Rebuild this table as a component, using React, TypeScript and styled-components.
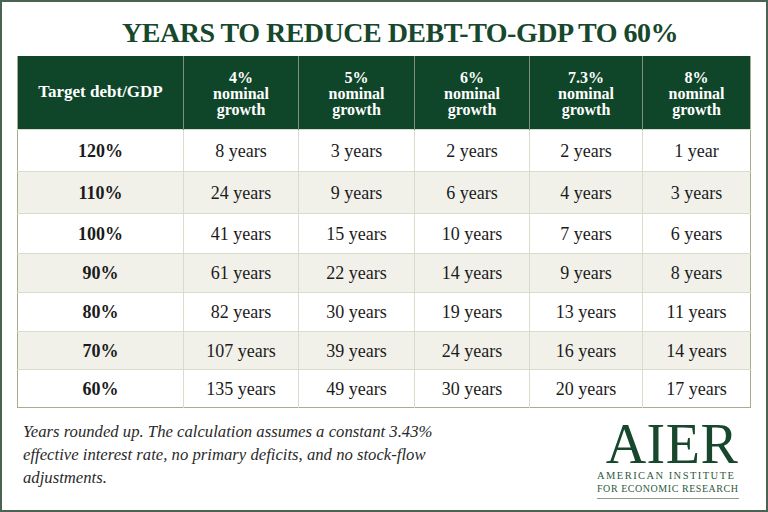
import styled, { createGlobalStyle } from "styled-components";

const GlobalStyle = createGlobalStyle`
  html, body {
    margin: 0;
    padding: 0;
    background: #ffffff;
  }
  * {
    box-sizing: border-box;
  }
`;

const GREEN = "#0f4529";

const Frame = styled.div`
  width: 768px;
  height: 512px;
  border: 2px solid #4b6352;
  background: #ffffff;
  display: flex;
  flex-direction: column;
  padding: 0 16px 0 15px;
  font-family: "Liberation Serif", "Times New Roman", serif;
  overflow: hidden;
`;

const Title = styled.h1`
  margin: 0;
  height: 54px;
  display: flex;
  align-items: center;
  justify-content: center;
  padding-top: 8px;
  padding-left: 33px;
  font-size: 28px;
  font-weight: 700;
  letter-spacing: -0.5px;
  color: #17472c;
`;

const Table = styled.table`
  width: 733px;
  border-collapse: collapse;
  table-layout: fixed;
  border: 1.5px solid #a3b08f;
  border-top: none;
`;

const HeadCell = styled.th<{ $first?: boolean }>`
  height: 73px;
  background: ${GREEN};
  color: #ffffff;
  font-weight: 700;
  font-size: ${({ $first }) => ($first ? "17px" : "16px")};
  line-height: 16px;
  text-align: center;
  vertical-align: middle;
  padding: 0;
  padding-top: ${({ $first }) => ($first ? "0" : "4px")};
  border-left: 1px solid #7d8f80;
  &:first-child {
    border-left: none;
  }
`;

const Row = styled.tr<{ $shade: boolean }>`
  background: ${({ $shade }) => ($shade ? "#f1f1ea" : "#ffffff")};
`;

const Cell = styled.td<{ $label?: boolean; $h: number }>`
  height: ${({ $h }) => $h}px;
  padding: 0;
  padding-top: 2px;
  text-align: center;
  vertical-align: middle;
  font-size: 18px;
  font-weight: ${({ $label }) => ($label ? 700 : 400)};
  color: #1b1b1b;
  border-left: 1px solid #d8dcca;
  border-top: 1px solid #d8dcca;
  &:first-child {
    border-left: none;
  }
`;

const Footer = styled.div`
  flex: 1;
  display: flex;
  justify-content: space-between;
  align-items: flex-start;
  padding: 12px 11px 0 6px;
`;

const Note = styled.p`
  margin: 0;
  width: 430px;
  font-style: italic;
  font-size: 16.7px;
  line-height: 23px;
  color: #2a2a2a;
`;

const Logo = styled.div`
  display: flex;
  flex-direction: column;
  align-items: flex-start;
  width: 142px;
  margin-top: 2px;
`;

const LogoMark = styled.div`
  align-self: stretch;
  font-size: 56px;
  line-height: 44px;
  height: 47px;
  text-align: center;
  color: #17472c;
  letter-spacing: 0.5px;
  padding-left: 8px;
`;

const LogoLine = styled.div<{ $size: number; $spacing: number }>`
  font-size: ${({ $size }) => $size}px;
  line-height: 13px;
  color: #2d5a3c;
  letter-spacing: ${({ $spacing }) => $spacing}px;
  white-space: nowrap;
`;

const LogoRule = styled.div`
  align-self: stretch;
  margin-top: 3px;
  height: 1px;
  background: #8e9c90;
`;

const columns = [
  { width: 166, label: "Target debt/GDP" },
  { width: 115, label: "4%" },
  { width: 116, label: "5%" },
  { width: 115, label: "6%" },
  { width: 113, label: "7.3%" },
  { width: 108, label: "8%" },
];

const rows = [
  { target: "120%", h: 42, values: ["8 years", "3 years", "2 years", "2 years", "1 year"] },
  { target: "110%", h: 42, values: ["24 years", "9 years", "6 years", "4 years", "3 years"] },
  { target: "100%", h: 40, values: ["41 years", "15 years", "10 years", "7 years", "6 years"] },
  { target: "90%", h: 39, values: ["61 years", "22 years", "14 years", "9 years", "8 years"] },
  { target: "80%", h: 39, values: ["82 years", "30 years", "19 years", "13 years", "11 years"] },
  { target: "70%", h: 38, values: ["107 years", "39 years", "24 years", "16 years", "14 years"] },
  { target: "60%", h: 38, values: ["135 years", "49 years", "30 years", "20 years", "17 years"] },
];

export default function App() {
  return (
    <>
      <GlobalStyle />
      <Frame>
        <Title>YEARS TO REDUCE DEBT-TO-GDP TO 60%</Title>
        <Table>
          <colgroup>
            {columns.map((c) => (
              <col key={c.label} style={{ width: c.width }} />
            ))}
          </colgroup>
          <thead>
            <tr>
              {columns.map((c, i) =>
                i === 0 ? (
                  <HeadCell key={c.label} $first>
                    {c.label}
                  </HeadCell>
                ) : (
                  <HeadCell key={c.label}>
                    {c.label}
                    <br />
                    nominal
                    <br />
                    growth
                  </HeadCell>
                )
              )}
            </tr>
          </thead>
          <tbody>
            {rows.map((r, i) => (
              <Row key={r.target} $shade={i % 2 === 1}>
                <Cell $label $h={r.h}>
                  {r.target}
                </Cell>
                {r.values.map((v, j) => (
                  <Cell key={j} $h={r.h}>
                    {v}
                  </Cell>
                ))}
              </Row>
            ))}
          </tbody>
        </Table>
        <Footer>
          <Note>
            Years rounded up. The calculation assumes a constant 3.43% effective interest rate, no
            primary deficits, and no stock-flow adjustments.
          </Note>
          <Logo>
            <LogoMark>AIER</LogoMark>
            <LogoLine $size={10.5} $spacing={1.45}>
              AMERICAN INSTITUTE
            </LogoLine>
            <LogoLine $size={10} $spacing={0.55}>
              FOR ECONOMIC RESEARCH
            </LogoLine>
            <LogoRule />
          </Logo>
        </Footer>
      </Frame>
    </>
  );
}
